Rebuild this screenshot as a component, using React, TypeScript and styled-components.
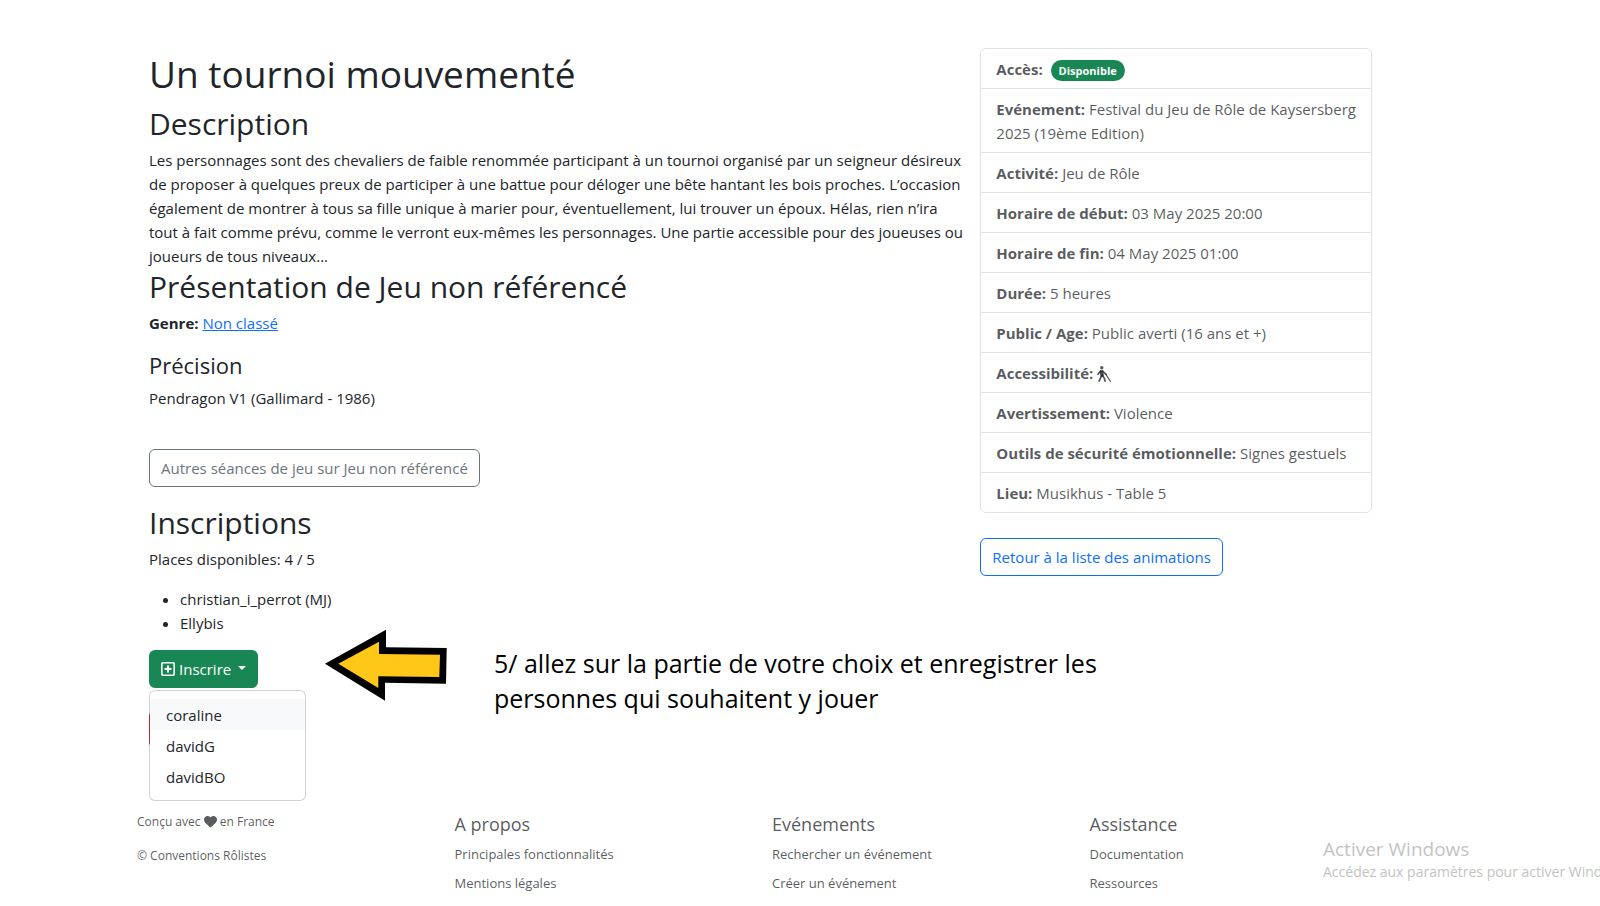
import React from "react";
import styled, { createGlobalStyle } from "styled-components";
import { FaHeart } from "react-icons/fa6";

const GlobalStyle = createGlobalStyle`
  * { box-sizing: border-box; }
  body {
    margin: 0;
    background: #fff;
    color: #212529;
    font-family: "Segoe UI", "Open Sans", "Noto Sans", sans-serif;
    font-size: 15px;
    line-height: 24px;
  }
  h1, h2, h3, h4, p, ul { margin: 0; padding: 0; font-weight: 400; }
`;

const Page = styled.div`
  position: relative;
  min-height: 100vh;
  padding: 48px 216px 0 137px;
  overflow: hidden;
`;

const Columns = styled.div`
  display: grid;
  grid-template-columns: 2fr 1fr;
`;

const Main = styled.main`
  min-width: 0;
  padding: 2px 0 0 12px;
`;

const Aside = styled.aside`
  min-width: 0;
  padding: 0 12px;
`;

const Title = styled.h1`
  font-size: 37px;
  line-height: 47px;
  margin-bottom: 8px;
`;

const Heading = styled.h2`
  font-size: 30px;
  line-height: 38px;
  margin-bottom: 5px;
`;

const SubHeading = styled.h3`
  font-size: 22px;
  line-height: 28px;
  margin-bottom: 7px;
`;

const Text = styled.p<{ $gap?: number }>`
  margin-bottom: ${(p) => p.$gap ?? 0}px;
`;

const Link = styled.a`
  color: #0d6efd;
`;

const OutlineLink = styled.a<{ $color: string }>`
  display: inline-block;
  padding: 6px 11px;
  border: 1px solid ${(p) => p.$color};
  border-radius: 6px;
  color: ${(p) => p.$color};
  text-decoration: none;
`;

const OtherSessions = styled.div`
  margin-bottom: 17px;
`;

const Players = styled.ul`
  padding-left: 31px;
  margin-bottom: 15px;
`;

const Actions = styled.div`
  position: relative;
  display: flex;
  flex-direction: column;
  align-items: flex-start;
  gap: 22px;
  margin-bottom: 62px;
`;

const RegisterButton = styled.button`
  display: flex;
  align-items: center;
  gap: 4px;
  height: 38px;
  padding: 0 12px;
  border: 0;
  border-radius: 6px;
  background: #198754;
  color: #fff;
  font: inherit;
`;

const Caret = styled.span`
  margin-left: 3px;
  border-top: 4px solid #fff;
  border-left: 4px solid transparent;
  border-right: 4px solid transparent;
  margin-bottom: 2px;
`;

const LeaveButton = styled.button`
  width: 120px;
  height: 38px;
  border: 1px solid #dc3545;
  border-radius: 6px;
  background: #dc3545;
`;

const Menu = styled.ul`
  position: absolute;
  top: 40px;
  left: 0;
  width: 157px;
  padding: 8px 0;
  border: 1px solid rgba(0, 0, 0, 0.175);
  border-radius: 6px;
  background: #fff;
  background-clip: padding-box;
  list-style: none;
`;

const MenuItem = styled.button<{ $active?: boolean }>`
  display: block;
  width: 100%;
  height: 31px;
  padding: 0 16px;
  border: 0;
  background: ${(p) => (p.$active ? "#f8f9fa" : "transparent")};
  color: #212529;
  font: inherit;
  text-align: left;
`;

const Note = styled.div`
  position: absolute;
  top: -21px;
  left: 176px;
  display: flex;
  gap: 47px;
  color: #000;
  font-size: 25px;
  line-height: 35px;
  white-space: nowrap;
`;

const NoteText = styled.p`
  padding-top: 17px;
`;

const InfoList = styled.ul`
  border: 1px solid #dee2e6;
  border-radius: 6px;
  margin-bottom: 25px;
  list-style: none;
  color: rgba(33, 37, 41, 0.75);
`;

const InfoItem = styled.li`
  padding: 8px 15px 7px;

  & + & { border-top: 1px solid #dee2e6; }

  svg { vertical-align: -3px; }
`;

const Badge = styled.span`
  display: inline-block;
  margin-left: 4px;
  padding: 0 8px;
  border-radius: 20px;
  background: #198754;
  color: #fff;
  font-size: 11px;
  font-weight: 700;
  line-height: 21px;
`;

const Footer = styled.footer`
  display: grid;
  grid-template-columns: repeat(4, 1fr);
  margin-right: -23px;
  color: rgba(33, 37, 41, 0.75);
`;

const Credits = styled.div`
  display: flex;
  flex-direction: column;
  gap: 10px;
  font-size: 12px;

  svg { vertical-align: -2px; }
`;

const FooterTitle = styled.h4`
  font-size: 18px;
  line-height: 24px;
  padding-top: 2px;
  margin-bottom: 8px;
`;

const FooterLink = styled.a`
  display: block;
  color: inherit;
  font-size: 13px;
  line-height: 21px;
  margin-bottom: 8px;
  text-decoration: none;
`;

const Watermark = styled.div`
  position: absolute;
  top: 837px;
  right: 0;
  width: 277px;
  overflow: hidden;
  color: #c3c3c3;
  font-size: 14px;
  line-height: 20px;
  white-space: nowrap;
`;

const WatermarkTitle = styled.p`
  font-size: 19px;
  line-height: 25px;
`;

const CaneWalker = () => (
  <svg
    width="14"
    height="16"
    viewBox="0 0 14 16"
    fill="none"
    stroke="currentColor"
    strokeLinecap="round"
    strokeLinejoin="round"
    aria-hidden="true"
  >
    <circle cx="4.8" cy="1.7" r="1.7" fill="currentColor" stroke="none" />
    <path d="M3.4 5 5.6 5 6.2 10 4 10Z" fill="currentColor" strokeWidth="1.4" />
    <path d="M3.4 5.2 1 8.2M5.6 5.2 9 8.4M4.2 10.4 2.2 15M5.6 10 7.4 12.2 8 15" strokeWidth="1.8" />
    <path d="M9 8.4 13.4 15.4" strokeWidth="1.1" />
  </svg>
);

const infos: [string, React.ReactNode][] = [
  ["Accès:", <Badge>Disponible</Badge>],
  ["Evénement:", "Festival du Jeu de Rôle de Kaysersberg 2025 (19ème Edition)"],
  ["Activité:", "Jeu de Rôle"],
  ["Horaire de début:", "03 May 2025 20:00"],
  ["Horaire de fin:", "04 May 2025 01:00"],
  ["Durée:", "5 heures"],
  ["Public / Age:", "Public averti (16 ans et +)"],
  ["Accessibilité:", <CaneWalker />],
  ["Avertissement:", "Violence"],
  ["Outils de sécurité émotionnelle:", "Signes gestuels"],
  ["Lieu:", "Musikhus - Table 5"],
];

const footerColumns = [
  { title: "A propos", links: ["Principales fonctionnalités", "Mentions légales"] },
  { title: "Evénements", links: ["Rechercher un événement", "Créer un événement"] },
  { title: "Assistance", links: ["Documentation", "Ressources"] },
];

const PlusSquare = () => (
  <svg width="14" height="14" viewBox="0 0 14 14" fill="none" stroke="#fff" aria-hidden="true">
    <rect x="0.8" y="0.8" width="12.4" height="12.4" rx="1.2" strokeWidth="1.6" />
    <path d="M7 3.6V10.4M3.6 7H10.4" strokeWidth="2" />
  </svg>
);

const Arrow = () => (
  <svg width="122" height="72" viewBox="0 0 122 72" aria-hidden="true">
    <path d="M0 34.7 61 .7V18.3L121.7 19 121 54.7 60 53.7V71.7Z" fill="#000" />
    <path d="M13.3 34.7 54 12.7V25L115 25.7 114.3 48 53.3 47.3V59Z" fill="#ffc818" />
  </svg>
);

export default function App() {
  return (
    <>
      <GlobalStyle />
      <Page>
        <Columns>
          <Main>
            <Title>Un tournoi mouvementé</Title>
            <Heading>Description</Heading>
            <Text>
              Les personnages sont des chevaliers de faible renommée participant à un tournoi organisé par un
              seigneur désireux
              <br />
              de proposer à quelques preux de participer à une battue pour déloger une bête hantant les bois
              proches. L’occasion
              <br />
              également de montrer à tous sa fille unique à marier pour, éventuellement, lui trouver un époux.
              Hélas, rien n’ira
              <br />
              tout à fait comme prévu, comme le verront eux-mêmes les personnages. Une partie accessible pour des
              joueuses ou
              <br />
              joueurs de tous niveaux...
            </Text>
            <Heading>Présentation de Jeu non référencé</Heading>
            <Text $gap={16}>
              <b>Genre:</b> <Link href="#">Non classé</Link>
            </Text>
            <SubHeading>Précision</SubHeading>
            <Text $gap={39}>Pendragon V1 (Gallimard - 1986)</Text>
            <OtherSessions>
              <OutlineLink href="#" $color="#6c757d">
                Autres séances de jeu sur Jeu non référencé
              </OutlineLink>
            </OtherSessions>
            <Heading>Inscriptions</Heading>
            <Text $gap={16}>Places disponibles: 4 / 5</Text>
            <Players>
              <li>christian_i_perrot (MJ)</li>
              <li>Ellybis</li>
            </Players>
            <Actions>
              <RegisterButton type="button" aria-haspopup="true" aria-expanded="true">
                <PlusSquare />
                Inscrire
                <Caret />
              </RegisterButton>
              <LeaveButton type="button" aria-label="Annuler" />
              <Menu>
                <li><MenuItem type="button" $active>coraline</MenuItem></li>
                <li><MenuItem type="button">davidG</MenuItem></li>
                <li><MenuItem type="button">davidBO</MenuItem></li>
              </Menu>
              <Note>
                <Arrow />
                <NoteText>
                  5/ allez sur la partie de votre choix et enregistrer les
                  <br />
                  personnes qui souhaitent y jouer
                </NoteText>
              </Note>
            </Actions>
          </Main>
          <Aside>
            <InfoList>
              {infos.map(([label, value]) => (
                <InfoItem key={label}>
                  <b>{label}</b> {value}
                </InfoItem>
              ))}
            </InfoList>
            <OutlineLink href="#" $color="#0d6efd">
              Retour à la liste des animations
            </OutlineLink>
          </Aside>
        </Columns>
        <Footer>
          <Credits>
            <p>
              Conçu avec <FaHeart size={13} /> en France
            </p>
            <p>© Conventions Rôlistes</p>
          </Credits>
          {footerColumns.map((column) => (
            <div key={column.title}>
              <FooterTitle>{column.title}</FooterTitle>
              {column.links.map((link) => (
                <FooterLink key={link} href="#">
                  {link}
                </FooterLink>
              ))}
            </div>
          ))}
        </Footer>
        <Watermark>
          <WatermarkTitle>Activer Windows</WatermarkTitle>
          <p>Accédez aux paramètres pour activer Wind</p>
        </Watermark>
      </Page>
    </>
  );
}
